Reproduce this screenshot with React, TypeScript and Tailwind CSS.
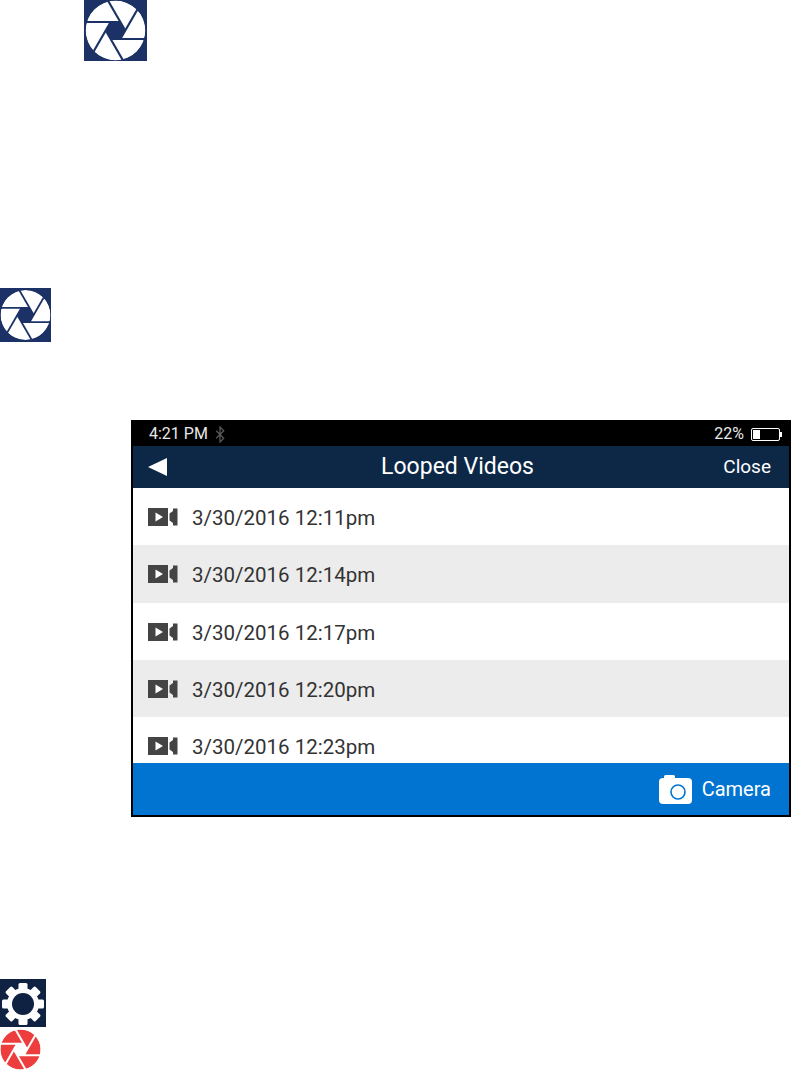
const rows = [
  { label: '3/30/2016 12:11pm', className: 'h-[57px] bg-white' },
  { label: '3/30/2016 12:14pm', className: 'h-[58px] bg-[#ececec]' },
  { label: '3/30/2016 12:17pm', className: 'h-[57px] bg-white' },
  { label: '3/30/2016 12:20pm', className: 'h-[57px] bg-[#ececec]' },
  { label: '3/30/2016 12:23pm', className: 'h-[46px] bg-white' },
];

// shutter blades: each gap runs along one side of the inner hexagon, out to the rim
function Aperture({ blade, gap, gapWidth = 3.5, className }: { blade: string; gap: string; gapWidth?: number; className: string }) {
  const r = 16;
  const point = (deg: number, radius: number) => {
    const rad = (deg * Math.PI) / 180;
    return [50 + radius * Math.cos(rad), 50 + radius * Math.sin(rad)];
  };
  const angles = [0, -60, -120, -180, -240, -300];
  const hexagon = angles.map((a) => point(a, r).join(',')).join(' ');
  return (
    <svg viewBox="0 0 100 100" className={className}>
      <circle cx="50" cy="50" r="49" fill={blade} />
      <polygon points={hexagon} fill={gap} />
      {angles.map((a) => {
        const [x1, y1] = point(a, r);
        const [x2, y2] = point(a - 60, r);
        const ex = x1 + (x2 - x1) * 6;
        const ey = y1 + (y2 - y1) * 6;
        return <line key={a} x1={x1} y1={y1} x2={ex} y2={ey} stroke={gap} strokeWidth={gapWidth} />;
      })}
      <circle cx="50" cy="50" r="59" fill="none" stroke={gap} strokeWidth="20" />
    </svg>
  );
}

function Gear() {
  const teeth = [0, 45, 90, 135, 180, 225, 270, 315];
  return (
    <svg viewBox="0 0 46 48" className="block h-[48px] w-[46px] bg-[#0f2242]">
      <g transform="translate(23 25)">
        {teeth.map((t) => (
          <rect key={t} x="-4.5" y="-21" width="9" height="10" rx="1.5" fill="white" transform={`rotate(${t})`} />
        ))}
        <circle r="16" fill="white" />
        <circle r="11" fill="#0f2242" />
      </g>
    </svg>
  );
}

function VideoIcon() {
  return (
    <svg viewBox="0 0 30 18" className="-mt-[2px] h-[18px] w-[30px] shrink-0">
      <rect x="0" y="0" width="20" height="18" fill="#444444" />
      <polygon points="21.5,5.5 25,3 25,0.5 29.5,0.5 29.5,17.5 25,17.5 25,15 21.5,12.5" fill="#444444" />
      <polygon points="7.5,4.5 7.5,13.5 15,9" fill="white" />
    </svg>
  );
}

function CameraIcon() {
  return (
    <svg viewBox="0 0 33 29" className="h-[29px] w-[33px]">
      <rect x="5" y="0" width="11" height="6" rx="1.5" fill="white" />
      <rect x="0" y="3" width="33" height="26" rx="4" fill="white" />
      <circle cx="19" cy="17" r="7" fill="none" stroke="#0074d0" strokeWidth="1.6" />
    </svg>
  );
}

function BluetoothIcon() {
  return (
    <svg viewBox="0 0 10 18" className="h-[17px] w-[10px]">
      <path d="M1 5 L9 13 L5 17 V1 L9 5 L1 13" fill="none" stroke="#5a5a5a" strokeWidth="1.3" />
    </svg>
  );
}

function BatteryIcon() {
  return (
    <div className="flex items-center">
      <div className="h-[13px] w-[29px] rounded-[2px] border border-white p-px">
        <div className="h-full w-[7px] bg-white" />
      </div>
      <div className="h-[5px] w-[2px] bg-white" />
    </div>
  );
}

export default function App() {
  return (
    <div className="h-[1074px] w-[791px] overflow-hidden bg-white font-['Roboto',sans-serif]">
      <div className="ml-[84px] h-[61px] w-[63px] bg-[#1c3266]">
        <Aperture blade="white" gap="#1c3266" className="block h-[61px] w-[63px]" />
      </div>

      <div className="mt-[227px] h-[54px] w-[51px] bg-[#1c3266]">
        <Aperture blade="white" gap="#1c3266" className="block h-[54px] w-[51px]" />
      </div>

      <div className="ml-[131px] mt-[78px] w-[660px] border-2 border-black">
        <div className="flex h-[24px] items-center justify-between bg-black pl-[16px] pr-[7px] text-[16px] text-[#e8e8e8]">
          <div className="flex items-center gap-[7px]">
            <span>4:21 PM</span>
            <BluetoothIcon />
          </div>
          <div className="flex items-center gap-[7px]">
            <span>22%</span>
            <BatteryIcon />
          </div>
        </div>

        <div className="relative flex h-[42px] items-center justify-between bg-[#0d2847] pl-[15px] pr-[18px] text-white">
          <div className="h-0 w-0 border-y-[9px] border-r-[19px] border-y-transparent border-r-white" />
          <span className="absolute inset-x-0 pr-[7px] text-center text-[23px]">Looped Videos</span>
          <span className="pt-[1px] text-[19px]">Close</span>
        </div>

        {rows.map((row) => (
          <div key={row.label} className={`overflow-hidden ${row.className}`}>
            <div className="flex h-[58px] items-center gap-[14px] pl-[15px] pt-[2px]">
              <VideoIcon />
              <span className="text-[20.5px] text-[#333333]">{row.label}</span>
            </div>
          </div>
        ))}

        <div className="flex h-[52px] items-center justify-end gap-[10px] bg-[#0074d0] pr-[18px] text-white">
          <CameraIcon />
          <span className="text-[20px]">Camera</span>
        </div>
      </div>

      <div className="mt-[162px] w-[46px]">
        <Gear />
      </div>
      <div className="w-[41px]">
        <Aperture blade="#ee3d3d" gap="white" gapWidth={5} className="block h-[45px] w-[41px]" />
      </div>
    </div>
  );
}
